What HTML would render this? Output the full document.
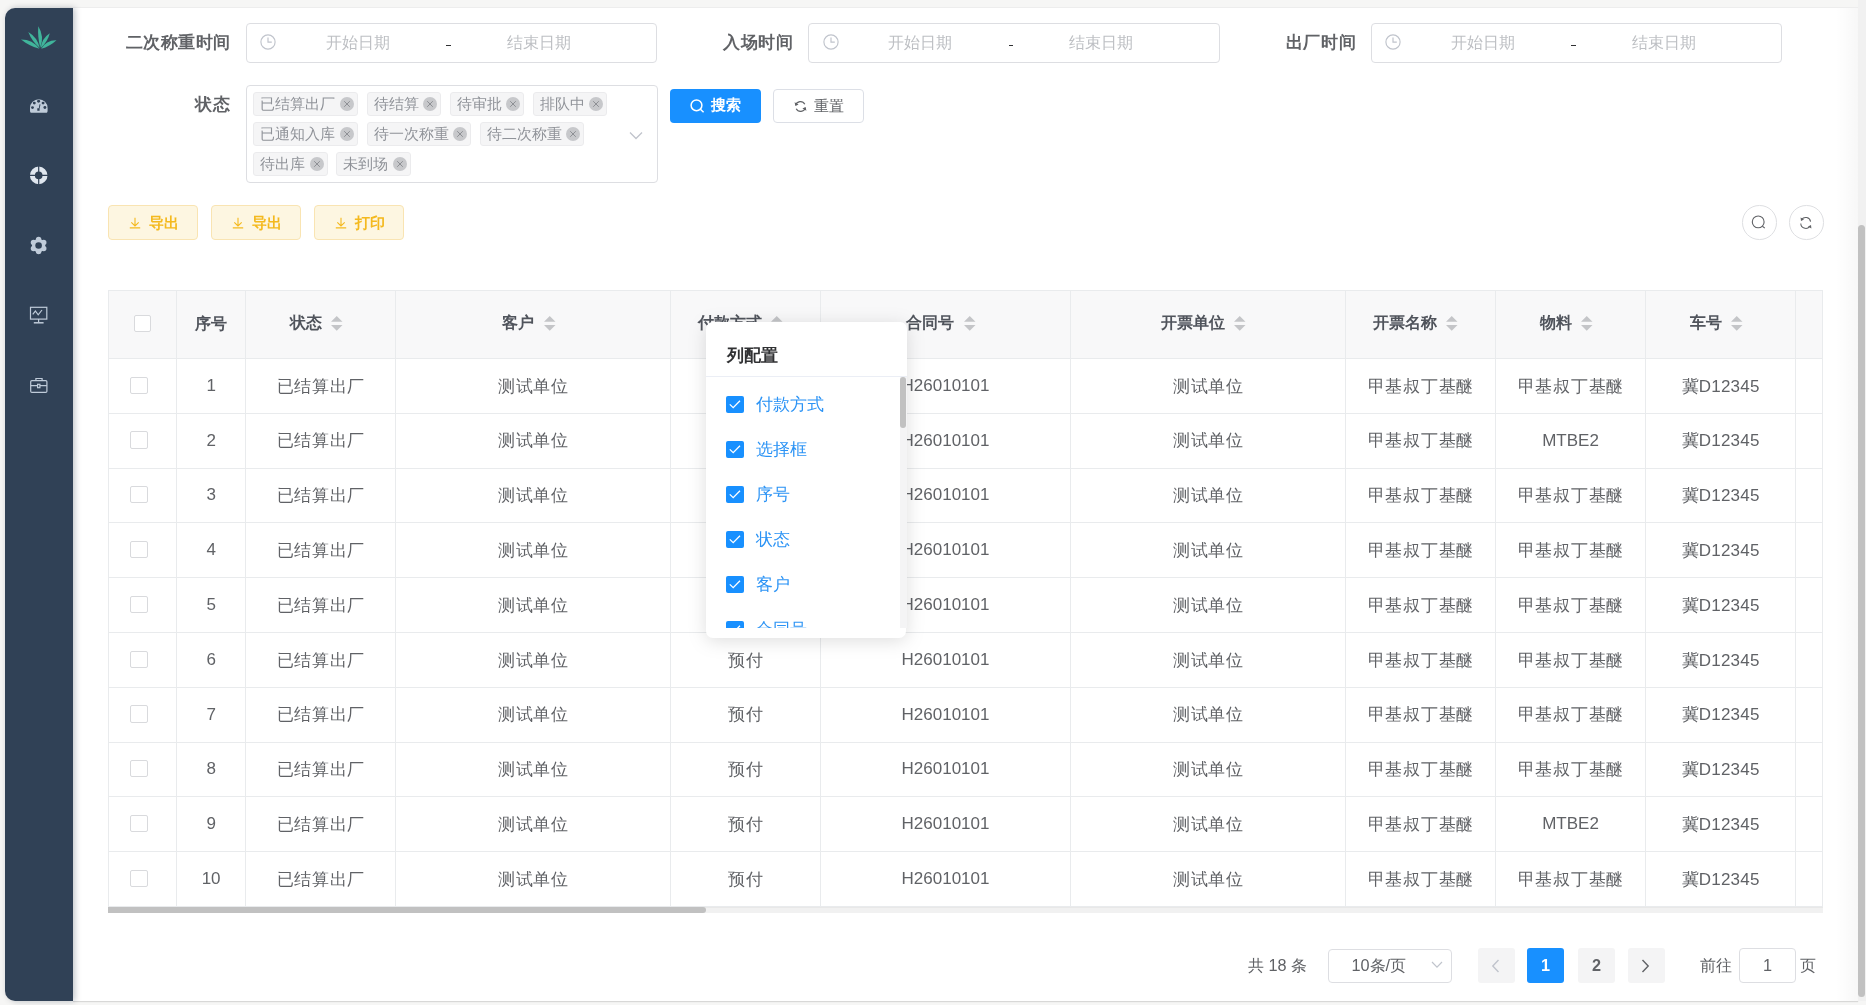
<!DOCTYPE html><html><head><meta charset="utf-8"><style>
*{box-sizing:border-box;margin:0;padding:0}
body{-webkit-font-smoothing:antialiased}
html,body{width:1866px;height:1005px;overflow:hidden;background:#f6f6f5;font-family:"Liberation Sans", sans-serif;}
.a{position:absolute}
.sb{left:5px;top:8px;width:68px;height:993px;background:#304156;border-radius:10px 0 0 10px;box-shadow:2px 0 6px rgba(0,21,41,.25);z-index:2}
.main{left:73px;top:8px;width:1785px;height:993px;background:#fff;box-shadow:0 1px 1px rgba(0,0,0,.12)}
.vtrack{left:1858px;top:0;width:8px;height:1001px;background:#f1f1f1}
.vthumb{left:1858px;top:225px;width:7px;height:772px;background:#c1c1c1;border-radius:4px}
.lbl{letter-spacing:.6px;font-weight:bold;font-size:17px;color:#606266;line-height:20px;white-space:nowrap}
.inp{border:1px solid #dddee2;border-radius:4px;background:#fff}
.ph{font-size:16.25px;color:#bec0c4;line-height:20px;white-space:nowrap}
.dash{font-size:16px;color:#303133;line-height:20px}
.tag{height:24px;background:#f5f5f6;border:1px solid #ebebed;border-radius:3px;font-size:15px;color:#909399;line-height:22px;padding-left:6px;white-space:nowrap}
.tag i{position:absolute;top:4px;width:14px;height:14px;border-radius:50%;background:#c7c8cb}
.btn{border-radius:4px;font-size:15px;line-height:20px;white-space:nowrap}
.th{font-weight:bold;font-size:16.25px;color:#50545c;line-height:20px;white-space:nowrap}
.td{font-size:17px;color:#606266;line-height:20px;white-space:nowrap}
.cb{width:17.4px;height:17.4px;border:1px solid #d9dadd;border-radius:2px;background:#fff}
.cj{letter-spacing:.7px;text-indent:.7px}
.pg{font-size:16.25px;color:#606266;line-height:20px;white-space:nowrap}
</style></head><body><div style="position:absolute;left:0;top:0;width:1866px;height:1005px;will-change:transform"><div class="a sb"></div>
<div class="a" style="left:60px;top:7px;width:1806px;height:1px;background:#ededed"></div>
<div class="a main"></div>
<div class="a" style="left:1836px;top:8px;width:22px;height:993px;background:linear-gradient(to right,rgba(0,0,0,0),rgba(0,0,0,.03))"></div>
<div class="a vtrack"></div><div class="a vthumb"></div>
<div class="a lbl" style="right:1634.9px;top:32.5px">二次称重时间</div>
<div class="a inp" style="left:245.5px;top:23px;width:411.5px;height:40px"></div>
<svg class="a" style="left:260.0px;top:34px" width="16" height="16" viewBox="0 0 16 16"><circle cx="8" cy="8" r="7.1" fill="none" stroke="#c0c4cc" stroke-width="1.15"/><path d="M8 3.6V8.2H11.8" fill="none" stroke="#c0c4cc" stroke-width="1.2"/></svg>
<div class="a ph" style="left:317.5px;width:80px;text-align:center;top:32px">开始日期</div>
<div class="a" style="left:446.0px;top:44.5px;width:4.5px;height:1.3px;background:#303133"></div>
<div class="a ph" style="left:498.5px;width:80px;text-align:center;top:32px">结束日期</div>
<div class="a lbl" style="right:1072.4px;top:32.5px">入场时间</div>
<div class="a inp" style="left:808px;top:23px;width:411.5px;height:40px"></div>
<svg class="a" style="left:822.5px;top:34px" width="16" height="16" viewBox="0 0 16 16"><circle cx="8" cy="8" r="7.1" fill="none" stroke="#c0c4cc" stroke-width="1.15"/><path d="M8 3.6V8.2H11.8" fill="none" stroke="#c0c4cc" stroke-width="1.2"/></svg>
<div class="a ph" style="left:880px;width:80px;text-align:center;top:32px">开始日期</div>
<div class="a" style="left:1008.5px;top:44.5px;width:4.5px;height:1.3px;background:#303133"></div>
<div class="a ph" style="left:1061px;width:80px;text-align:center;top:32px">结束日期</div>
<div class="a lbl" style="right:509.9px;top:32.5px">出厂时间</div>
<div class="a inp" style="left:1370.5px;top:23px;width:411.5px;height:40px"></div>
<svg class="a" style="left:1385.0px;top:34px" width="16" height="16" viewBox="0 0 16 16"><circle cx="8" cy="8" r="7.1" fill="none" stroke="#c0c4cc" stroke-width="1.15"/><path d="M8 3.6V8.2H11.8" fill="none" stroke="#c0c4cc" stroke-width="1.2"/></svg>
<div class="a ph" style="left:1442.5px;width:80px;text-align:center;top:32px">开始日期</div>
<div class="a" style="left:1571.0px;top:44.5px;width:4.5px;height:1.3px;background:#303133"></div>
<div class="a ph" style="left:1623.5px;width:80px;text-align:center;top:32px">结束日期</div>
<div class="a lbl" style="right:1635.4px;top:95px">状态</div>
<div class="a inp" style="left:245.5px;top:85px;width:412px;height:97.5px"></div>
<div class="a tag" style="left:253.3px;top:92.3px;width:104.5px">已结算出厂<i style="left:85.5px"></i><svg class="a" style="left:88.5px;top:7px" width="8" height="8" viewBox="0 0 8 8"><path d="M1.2 1.2L6.8 6.8M6.8 1.2L1.2 6.8" stroke="#8e9095" stroke-width="1"/></svg></div>
<div class="a tag" style="left:366.5px;top:92.3px;width:74.5px">待结算<i style="left:55.5px"></i><svg class="a" style="left:58.5px;top:7px" width="8" height="8" viewBox="0 0 8 8"><path d="M1.2 1.2L6.8 6.8M6.8 1.2L1.2 6.8" stroke="#8e9095" stroke-width="1"/></svg></div>
<div class="a tag" style="left:449.6px;top:92.3px;width:74.5px">待审批<i style="left:55.5px"></i><svg class="a" style="left:58.5px;top:7px" width="8" height="8" viewBox="0 0 8 8"><path d="M1.2 1.2L6.8 6.8M6.8 1.2L1.2 6.8" stroke="#8e9095" stroke-width="1"/></svg></div>
<div class="a tag" style="left:532.5px;top:92.3px;width:74.5px">排队中<i style="left:55.5px"></i><svg class="a" style="left:58.5px;top:7px" width="8" height="8" viewBox="0 0 8 8"><path d="M1.2 1.2L6.8 6.8M6.8 1.2L1.2 6.8" stroke="#8e9095" stroke-width="1"/></svg></div>
<div class="a tag" style="left:253.3px;top:122.3px;width:104.5px">已通知入库<i style="left:85.5px"></i><svg class="a" style="left:88.5px;top:7px" width="8" height="8" viewBox="0 0 8 8"><path d="M1.2 1.2L6.8 6.8M6.8 1.2L1.2 6.8" stroke="#8e9095" stroke-width="1"/></svg></div>
<div class="a tag" style="left:366.5px;top:122.3px;width:104.5px">待一次称重<i style="left:85.5px"></i><svg class="a" style="left:88.5px;top:7px" width="8" height="8" viewBox="0 0 8 8"><path d="M1.2 1.2L6.8 6.8M6.8 1.2L1.2 6.8" stroke="#8e9095" stroke-width="1"/></svg></div>
<div class="a tag" style="left:479.8px;top:122.3px;width:104.5px">待二次称重<i style="left:85.5px"></i><svg class="a" style="left:88.5px;top:7px" width="8" height="8" viewBox="0 0 8 8"><path d="M1.2 1.2L6.8 6.8M6.8 1.2L1.2 6.8" stroke="#8e9095" stroke-width="1"/></svg></div>
<div class="a tag" style="left:253.3px;top:152.3px;width:74.5px">待出库<i style="left:55.5px"></i><svg class="a" style="left:58.5px;top:7px" width="8" height="8" viewBox="0 0 8 8"><path d="M1.2 1.2L6.8 6.8M6.8 1.2L1.2 6.8" stroke="#8e9095" stroke-width="1"/></svg></div>
<div class="a tag" style="left:336.3px;top:152.3px;width:74.5px">未到场<i style="left:55.5px"></i><svg class="a" style="left:58.5px;top:7px" width="8" height="8" viewBox="0 0 8 8"><path d="M1.2 1.2L6.8 6.8M6.8 1.2L1.2 6.8" stroke="#8e9095" stroke-width="1"/></svg></div>
<svg class="a" style="left:629px;top:131px" width="14" height="9" viewBox="0 0 14 9"><path d="M1 1.5L7 7.5L13 1.5" fill="none" stroke="#c0c4cc" stroke-width="1.3"/></svg>
<div class="a btn" style="left:670px;top:89px;width:91px;height:34px;background:#1890ff;color:#fff"></div>
<svg class="a" style="left:689.5px;top:98.5px" width="15" height="14" viewBox="0 0 15 14"><circle cx="6.5" cy="6.3" r="5.4" fill="none" stroke="#fff" stroke-width="1.5"/><path d="M10.4 10.2L13.6 13.3" stroke="#fff" stroke-width="1.5"/></svg>
<div class="a btn" style="left:711px;top:95.3px;color:#fff;font-weight:bold">搜索</div>
<div class="a btn" style="left:773px;top:89px;width:91px;height:34px;border:1px solid #dcdfe6;background:#fff"></div>
<svg class="a" style="left:794px;top:99.5px" width="13" height="13" viewBox="0 0 13 13"><path d="M10.8 4.3A5 5 0 0 0 1.6 5.2M2.2 8.7A5 5 0 0 0 11.4 7.8" fill="none" stroke="#606266" stroke-width="1.2"/><path d="M0.6 2.2L1.4 6L4.6 4.6Z M12.4 10.8L11.6 7L8.4 8.4Z" fill="#606266"/></svg>
<div class="a btn" style="left:814px;top:96px;color:#606266">重置</div>
<div class="a btn" style="left:108px;top:205px;width:90.2px;height:35px;background:#fdf6e1;border:1px solid #f9e4b2"></div>
<svg class="a" style="left:128.5px;top:217px" width="12" height="12" viewBox="0 0 12 12"><path d="M6 0.8V9M2.3 5.3L6 9L9.7 5.3M0.8 10.9H11.2" fill="none" stroke="#f4b91e" stroke-width="1.1"/></svg>
<div class="a btn" style="left:149px;top:212.5px;color:#f4b91e;font-weight:bold">导出</div>
<div class="a btn" style="left:211.2px;top:205px;width:90.2px;height:35px;background:#fdf6e1;border:1px solid #f9e4b2"></div>
<svg class="a" style="left:231.7px;top:217px" width="12" height="12" viewBox="0 0 12 12"><path d="M6 0.8V9M2.3 5.3L6 9L9.7 5.3M0.8 10.9H11.2" fill="none" stroke="#f4b91e" stroke-width="1.1"/></svg>
<div class="a btn" style="left:252.2px;top:212.5px;color:#f4b91e;font-weight:bold">导出</div>
<div class="a btn" style="left:314.2px;top:205px;width:90.2px;height:35px;background:#fdf6e1;border:1px solid #f9e4b2"></div>
<svg class="a" style="left:334.7px;top:217px" width="12" height="12" viewBox="0 0 12 12"><path d="M6 0.8V9M2.3 5.3L6 9L9.7 5.3M0.8 10.9H11.2" fill="none" stroke="#f4b91e" stroke-width="1.1"/></svg>
<div class="a btn" style="left:355.2px;top:212.5px;color:#f4b91e;font-weight:bold">打印</div>
<div class="a" style="left:1742px;top:205px;width:34.5px;height:34.5px;border:1px solid #dedfe2;border-radius:50%"></div>
<div class="a" style="left:1789.3px;top:205px;width:34.5px;height:34.5px;border:1px solid #dedfe2;border-radius:50%"></div>
<svg class="a" style="left:1750px;top:214px" width="17" height="17" viewBox="0 0 17 17"><circle cx="8.2" cy="7.9" r="5.9" fill="none" stroke="#606266" stroke-width="1.1"/><path d="M12.4 12.2L14.8 14.1" stroke="#606266" stroke-width="1.1"/></svg>
<svg class="a" style="left:1799px;top:215.5px" width="14" height="14" viewBox="0 0 14 14"><path d="M11.6 5.6A5 5 0 0 0 2.6 3.6M1.8 7.4A5 5 0 0 0 10.6 10.6" fill="none" stroke="#606266" stroke-width="1.05"/><path d="M1.6 1.6L2 5L5 3.6Z M12.4 12.4L12 9L9 10.4Z" fill="#606266"/></svg>
<div class="a" style="left:108px;top:290.5px;width:1714.5px;height:67.89999999999998px;background:#f8f8f9"></div>
<div class="a" style="left:108px;top:290.0px;width:1714.5px;height:1px;background:#e9ebed"></div>
<div class="a" style="left:108px;top:357.9px;width:1714.5px;height:1px;background:#e9ebed"></div>
<div class="a" style="left:108px;top:412.7px;width:1714.5px;height:1px;background:#e9ebed"></div>
<div class="a" style="left:108px;top:467.5px;width:1714.5px;height:1px;background:#e9ebed"></div>
<div class="a" style="left:108px;top:522.3px;width:1714.5px;height:1px;background:#e9ebed"></div>
<div class="a" style="left:108px;top:577.0999999999999px;width:1714.5px;height:1px;background:#e9ebed"></div>
<div class="a" style="left:108px;top:631.9px;width:1714.5px;height:1px;background:#e9ebed"></div>
<div class="a" style="left:108px;top:686.6999999999999px;width:1714.5px;height:1px;background:#e9ebed"></div>
<div class="a" style="left:108px;top:741.5px;width:1714.5px;height:1px;background:#e9ebed"></div>
<div class="a" style="left:108px;top:796.3px;width:1714.5px;height:1px;background:#e9ebed"></div>
<div class="a" style="left:108px;top:851.0999999999999px;width:1714.5px;height:1px;background:#e9ebed"></div>
<div class="a" style="left:108px;top:905.9px;width:1714.5px;height:1px;background:#e9ebed"></div>
<div class="a" style="left:107.5px;top:290.5px;width:1px;height:616.0px;background:#e9ebed"></div>
<div class="a" style="left:176.25px;top:290.5px;width:1px;height:616.0px;background:#e9ebed"></div>
<div class="a" style="left:245.0px;top:290.5px;width:1px;height:616.0px;background:#e9ebed"></div>
<div class="a" style="left:395.0px;top:290.5px;width:1px;height:616.0px;background:#e9ebed"></div>
<div class="a" style="left:670.0px;top:290.5px;width:1px;height:616.0px;background:#e9ebed"></div>
<div class="a" style="left:820.0px;top:290.5px;width:1px;height:616.0px;background:#e9ebed"></div>
<div class="a" style="left:1070.0px;top:290.5px;width:1px;height:616.0px;background:#e9ebed"></div>
<div class="a" style="left:1345.0px;top:290.5px;width:1px;height:616.0px;background:#e9ebed"></div>
<div class="a" style="left:1495.0px;top:290.5px;width:1px;height:616.0px;background:#e9ebed"></div>
<div class="a" style="left:1645.0px;top:290.5px;width:1px;height:616.0px;background:#e9ebed"></div>
<div class="a" style="left:1795.0px;top:290.5px;width:1px;height:616.0px;background:#e9ebed"></div>
<div class="a" style="left:1822.0px;top:290.5px;width:1px;height:616.0px;background:#e9ebed"></div>
<div class="a cb" style="left:134.3px;top:315.3px;width:16.5px;height:17px"></div>
<div class="a th" style="left:176.75px;width:68.75px;text-align:center;top:312.5px">序号</div>
<div class="a th" style="left:289.55px;top:312px">状态</div>
<svg class="a" style="left:331.45px;top:316px" width="12" height="15" viewBox="0 0 12 15"><path d="M0 5.8L5.75 0L11.5 5.8Z M0 9L5.75 14.8L11.5 9Z" fill="#c4c5c8"/></svg>
<div class="a th" style="left:502.05px;top:312px">客户</div>
<svg class="a" style="left:543.9499999999999px;top:316px" width="12" height="15" viewBox="0 0 12 15"><path d="M0 5.8L5.75 0L11.5 5.8Z M0 9L5.75 14.8L11.5 9Z" fill="#c4c5c8"/></svg>
<div class="a th" style="left:698.3px;top:312px">付款方式</div>
<svg class="a" style="left:771.3px;top:316px" width="12" height="15" viewBox="0 0 12 15"><path d="M0 5.8L5.75 0L11.5 5.8Z M0 9L5.75 14.8L11.5 9Z" fill="#c4c5c8"/></svg>
<div class="a th" style="left:906.425px;top:312px">合同号</div>
<svg class="a" style="left:963.875px;top:316px" width="12" height="15" viewBox="0 0 12 15"><path d="M0 5.8L5.75 0L11.5 5.8Z M0 9L5.75 14.8L11.5 9Z" fill="#c4c5c8"/></svg>
<div class="a th" style="left:1160.8px;top:312px">开票单位</div>
<svg class="a" style="left:1233.8px;top:316px" width="12" height="15" viewBox="0 0 12 15"><path d="M0 5.8L5.75 0L11.5 5.8Z M0 9L5.75 14.8L11.5 9Z" fill="#c4c5c8"/></svg>
<div class="a th" style="left:1373.3px;top:312px">开票名称</div>
<svg class="a" style="left:1446.3px;top:316px" width="12" height="15" viewBox="0 0 12 15"><path d="M0 5.8L5.75 0L11.5 5.8Z M0 9L5.75 14.8L11.5 9Z" fill="#c4c5c8"/></svg>
<div class="a th" style="left:1539.55px;top:312px">物料</div>
<svg class="a" style="left:1581.45px;top:316px" width="12" height="15" viewBox="0 0 12 15"><path d="M0 5.8L5.75 0L11.5 5.8Z M0 9L5.75 14.8L11.5 9Z" fill="#c4c5c8"/></svg>
<div class="a th" style="left:1689.55px;top:312px">车号</div>
<svg class="a" style="left:1731.45px;top:316px" width="12" height="15" viewBox="0 0 12 15"><path d="M0 5.8L5.75 0L11.5 5.8Z M0 9L5.75 14.8L11.5 9Z" fill="#c4c5c8"/></svg>
<div class="a cb" style="left:130.3px;top:376.5px"></div>
<div class="a td" style="left:176.75px;width:68.75px;text-align:center;top:375.79999999999995px">1</div>
<div class="a td cj" style="left:245.5px;width:150.0px;text-align:center;top:376.59999999999997px">已结算出厂</div>
<div class="a td cj" style="left:395.5px;width:275.0px;text-align:center;top:376.59999999999997px">测试单位</div>
<div class="a td cj" style="left:670.5px;width:150.0px;text-align:center;top:376.59999999999997px">预付</div>
<div class="a td" style="left:820.5px;width:250.0px;text-align:center;top:375.79999999999995px">H26010101</div>
<div class="a td cj" style="left:1070.5px;width:275.0px;text-align:center;top:376.59999999999997px">测试单位</div>
<div class="a td cj" style="left:1345.5px;width:150.0px;text-align:center;top:376.59999999999997px">甲基叔丁基醚</div>
<div class="a td cj" style="left:1495.5px;width:150.0px;text-align:center;top:376.59999999999997px">甲基叔丁基醚</div>
<div class="a td cj" style="left:1645.5px;width:150.0px;text-align:center;top:376.59999999999997px;letter-spacing:.2px;text-indent:.2px">冀D12345</div>
<div class="a cb" style="left:130.3px;top:431.3px"></div>
<div class="a td" style="left:176.75px;width:68.75px;text-align:center;top:430.59999999999997px">2</div>
<div class="a td cj" style="left:245.5px;width:150.0px;text-align:center;top:431.4px">已结算出厂</div>
<div class="a td cj" style="left:395.5px;width:275.0px;text-align:center;top:431.4px">测试单位</div>
<div class="a td cj" style="left:670.5px;width:150.0px;text-align:center;top:431.4px">预付</div>
<div class="a td" style="left:820.5px;width:250.0px;text-align:center;top:430.59999999999997px">H26010101</div>
<div class="a td cj" style="left:1070.5px;width:275.0px;text-align:center;top:431.4px">测试单位</div>
<div class="a td cj" style="left:1345.5px;width:150.0px;text-align:center;top:431.4px">甲基叔丁基醚</div>
<div class="a td" style="left:1495.5px;width:150.0px;text-align:center;top:430.59999999999997px">MTBE2</div>
<div class="a td cj" style="left:1645.5px;width:150.0px;text-align:center;top:431.4px;letter-spacing:.2px;text-indent:.2px">冀D12345</div>
<div class="a cb" style="left:130.3px;top:486.1px"></div>
<div class="a td" style="left:176.75px;width:68.75px;text-align:center;top:485.4px">3</div>
<div class="a td cj" style="left:245.5px;width:150.0px;text-align:center;top:486.2px">已结算出厂</div>
<div class="a td cj" style="left:395.5px;width:275.0px;text-align:center;top:486.2px">测试单位</div>
<div class="a td cj" style="left:670.5px;width:150.0px;text-align:center;top:486.2px">预付</div>
<div class="a td" style="left:820.5px;width:250.0px;text-align:center;top:485.4px">H26010101</div>
<div class="a td cj" style="left:1070.5px;width:275.0px;text-align:center;top:486.2px">测试单位</div>
<div class="a td cj" style="left:1345.5px;width:150.0px;text-align:center;top:486.2px">甲基叔丁基醚</div>
<div class="a td cj" style="left:1495.5px;width:150.0px;text-align:center;top:486.2px">甲基叔丁基醚</div>
<div class="a td cj" style="left:1645.5px;width:150.0px;text-align:center;top:486.2px;letter-spacing:.2px;text-indent:.2px">冀D12345</div>
<div class="a cb" style="left:130.3px;top:540.9px"></div>
<div class="a td" style="left:176.75px;width:68.75px;text-align:center;top:540.1999999999999px">4</div>
<div class="a td cj" style="left:245.5px;width:150.0px;text-align:center;top:541.0px">已结算出厂</div>
<div class="a td cj" style="left:395.5px;width:275.0px;text-align:center;top:541.0px">测试单位</div>
<div class="a td cj" style="left:670.5px;width:150.0px;text-align:center;top:541.0px">预付</div>
<div class="a td" style="left:820.5px;width:250.0px;text-align:center;top:540.1999999999999px">H26010101</div>
<div class="a td cj" style="left:1070.5px;width:275.0px;text-align:center;top:541.0px">测试单位</div>
<div class="a td cj" style="left:1345.5px;width:150.0px;text-align:center;top:541.0px">甲基叔丁基醚</div>
<div class="a td cj" style="left:1495.5px;width:150.0px;text-align:center;top:541.0px">甲基叔丁基醚</div>
<div class="a td cj" style="left:1645.5px;width:150.0px;text-align:center;top:541.0px;letter-spacing:.2px;text-indent:.2px">冀D12345</div>
<div class="a cb" style="left:130.3px;top:595.6999999999999px"></div>
<div class="a td" style="left:176.75px;width:68.75px;text-align:center;top:594.9999999999999px">5</div>
<div class="a td cj" style="left:245.5px;width:150.0px;text-align:center;top:595.8px">已结算出厂</div>
<div class="a td cj" style="left:395.5px;width:275.0px;text-align:center;top:595.8px">测试单位</div>
<div class="a td cj" style="left:670.5px;width:150.0px;text-align:center;top:595.8px">预付</div>
<div class="a td" style="left:820.5px;width:250.0px;text-align:center;top:594.9999999999999px">H26010101</div>
<div class="a td cj" style="left:1070.5px;width:275.0px;text-align:center;top:595.8px">测试单位</div>
<div class="a td cj" style="left:1345.5px;width:150.0px;text-align:center;top:595.8px">甲基叔丁基醚</div>
<div class="a td cj" style="left:1495.5px;width:150.0px;text-align:center;top:595.8px">甲基叔丁基醚</div>
<div class="a td cj" style="left:1645.5px;width:150.0px;text-align:center;top:595.8px;letter-spacing:.2px;text-indent:.2px">冀D12345</div>
<div class="a cb" style="left:130.3px;top:650.5px"></div>
<div class="a td" style="left:176.75px;width:68.75px;text-align:center;top:649.8px">6</div>
<div class="a td cj" style="left:245.5px;width:150.0px;text-align:center;top:650.6px">已结算出厂</div>
<div class="a td cj" style="left:395.5px;width:275.0px;text-align:center;top:650.6px">测试单位</div>
<div class="a td cj" style="left:670.5px;width:150.0px;text-align:center;top:650.6px">预付</div>
<div class="a td" style="left:820.5px;width:250.0px;text-align:center;top:649.8px">H26010101</div>
<div class="a td cj" style="left:1070.5px;width:275.0px;text-align:center;top:650.6px">测试单位</div>
<div class="a td cj" style="left:1345.5px;width:150.0px;text-align:center;top:650.6px">甲基叔丁基醚</div>
<div class="a td cj" style="left:1495.5px;width:150.0px;text-align:center;top:650.6px">甲基叔丁基醚</div>
<div class="a td cj" style="left:1645.5px;width:150.0px;text-align:center;top:650.6px;letter-spacing:.2px;text-indent:.2px">冀D12345</div>
<div class="a cb" style="left:130.3px;top:705.3px"></div>
<div class="a td" style="left:176.75px;width:68.75px;text-align:center;top:704.5999999999999px">7</div>
<div class="a td cj" style="left:245.5px;width:150.0px;text-align:center;top:705.4px">已结算出厂</div>
<div class="a td cj" style="left:395.5px;width:275.0px;text-align:center;top:705.4px">测试单位</div>
<div class="a td cj" style="left:670.5px;width:150.0px;text-align:center;top:705.4px">预付</div>
<div class="a td" style="left:820.5px;width:250.0px;text-align:center;top:704.5999999999999px">H26010101</div>
<div class="a td cj" style="left:1070.5px;width:275.0px;text-align:center;top:705.4px">测试单位</div>
<div class="a td cj" style="left:1345.5px;width:150.0px;text-align:center;top:705.4px">甲基叔丁基醚</div>
<div class="a td cj" style="left:1495.5px;width:150.0px;text-align:center;top:705.4px">甲基叔丁基醚</div>
<div class="a td cj" style="left:1645.5px;width:150.0px;text-align:center;top:705.4px;letter-spacing:.2px;text-indent:.2px">冀D12345</div>
<div class="a cb" style="left:130.3px;top:760.1px"></div>
<div class="a td" style="left:176.75px;width:68.75px;text-align:center;top:759.4px">8</div>
<div class="a td cj" style="left:245.5px;width:150.0px;text-align:center;top:760.2px">已结算出厂</div>
<div class="a td cj" style="left:395.5px;width:275.0px;text-align:center;top:760.2px">测试单位</div>
<div class="a td cj" style="left:670.5px;width:150.0px;text-align:center;top:760.2px">预付</div>
<div class="a td" style="left:820.5px;width:250.0px;text-align:center;top:759.4px">H26010101</div>
<div class="a td cj" style="left:1070.5px;width:275.0px;text-align:center;top:760.2px">测试单位</div>
<div class="a td cj" style="left:1345.5px;width:150.0px;text-align:center;top:760.2px">甲基叔丁基醚</div>
<div class="a td cj" style="left:1495.5px;width:150.0px;text-align:center;top:760.2px">甲基叔丁基醚</div>
<div class="a td cj" style="left:1645.5px;width:150.0px;text-align:center;top:760.2px;letter-spacing:.2px;text-indent:.2px">冀D12345</div>
<div class="a cb" style="left:130.3px;top:814.9px"></div>
<div class="a td" style="left:176.75px;width:68.75px;text-align:center;top:814.1999999999999px">9</div>
<div class="a td cj" style="left:245.5px;width:150.0px;text-align:center;top:815.0px">已结算出厂</div>
<div class="a td cj" style="left:395.5px;width:275.0px;text-align:center;top:815.0px">测试单位</div>
<div class="a td cj" style="left:670.5px;width:150.0px;text-align:center;top:815.0px">预付</div>
<div class="a td" style="left:820.5px;width:250.0px;text-align:center;top:814.1999999999999px">H26010101</div>
<div class="a td cj" style="left:1070.5px;width:275.0px;text-align:center;top:815.0px">测试单位</div>
<div class="a td cj" style="left:1345.5px;width:150.0px;text-align:center;top:815.0px">甲基叔丁基醚</div>
<div class="a td" style="left:1495.5px;width:150.0px;text-align:center;top:814.1999999999999px">MTBE2</div>
<div class="a td cj" style="left:1645.5px;width:150.0px;text-align:center;top:815.0px;letter-spacing:.2px;text-indent:.2px">冀D12345</div>
<div class="a cb" style="left:130.3px;top:869.6999999999999px"></div>
<div class="a td" style="left:176.75px;width:68.75px;text-align:center;top:868.9999999999999px">10</div>
<div class="a td cj" style="left:245.5px;width:150.0px;text-align:center;top:869.8px">已结算出厂</div>
<div class="a td cj" style="left:395.5px;width:275.0px;text-align:center;top:869.8px">测试单位</div>
<div class="a td cj" style="left:670.5px;width:150.0px;text-align:center;top:869.8px">预付</div>
<div class="a td" style="left:820.5px;width:250.0px;text-align:center;top:868.9999999999999px">H26010101</div>
<div class="a td cj" style="left:1070.5px;width:275.0px;text-align:center;top:869.8px">测试单位</div>
<div class="a td cj" style="left:1345.5px;width:150.0px;text-align:center;top:869.8px">甲基叔丁基醚</div>
<div class="a td cj" style="left:1495.5px;width:150.0px;text-align:center;top:869.8px">甲基叔丁基醚</div>
<div class="a td cj" style="left:1645.5px;width:150.0px;text-align:center;top:869.8px;letter-spacing:.2px;text-indent:.2px">冀D12345</div>
<div class="a" style="left:108px;top:906.5px;width:1714.5px;height:6.5px;background:#f1f1f1;border-top:1px solid #e8e8e8"></div>
<div class="a" style="left:108px;top:906.5px;width:597.5px;height:6.5px;background:#c1c1c1;border-radius:0 3px 3px 0"></div>
<div class="a" style="left:706px;top:322px;width:200.5px;height:315.5px;z-index:5;filter:drop-shadow(0 3px 9px rgba(0,0,0,.13))"><div class="a" style="left:0;top:0;width:200.5px;height:55px;background:#fff;border-radius:7px 7px 0 0"></div><div class="a" style="left:20.5px;top:23.5px;font-weight:bold;font-size:17px;color:#303133;line-height:20px;white-space:nowrap">列配置</div><div class="a" style="left:0;top:54px;width:200.5px;height:1px;background:#ebeef5"></div><div class="a" style="left:0;top:55px;width:193.5px;height:250.5px;overflow:hidden;background:#fff"><div class="a" style="left:20px;top:19px;width:18px;height:17px;background:#1890ff;border-radius:2px"></div><svg class="a" style="left:20px;top:19px" width="18" height="17" viewBox="0 0 18 17"><path d="M3.8 8.4L7.2 11.6L14 4.8" fill="none" stroke="#fff" stroke-width="1.3"/></svg><div class="a" style="left:50px;top:17.5px;font-size:17px;color:#2b93f5;line-height:20px;white-space:nowrap">付款方式</div><div class="a" style="left:20px;top:64px;width:18px;height:17px;background:#1890ff;border-radius:2px"></div><svg class="a" style="left:20px;top:64px" width="18" height="17" viewBox="0 0 18 17"><path d="M3.8 8.4L7.2 11.6L14 4.8" fill="none" stroke="#fff" stroke-width="1.3"/></svg><div class="a" style="left:50px;top:62.5px;font-size:17px;color:#2b93f5;line-height:20px;white-space:nowrap">选择框</div><div class="a" style="left:20px;top:109px;width:18px;height:17px;background:#1890ff;border-radius:2px"></div><svg class="a" style="left:20px;top:109px" width="18" height="17" viewBox="0 0 18 17"><path d="M3.8 8.4L7.2 11.6L14 4.8" fill="none" stroke="#fff" stroke-width="1.3"/></svg><div class="a" style="left:50px;top:107.5px;font-size:17px;color:#2b93f5;line-height:20px;white-space:nowrap">序号</div><div class="a" style="left:20px;top:154px;width:18px;height:17px;background:#1890ff;border-radius:2px"></div><svg class="a" style="left:20px;top:154px" width="18" height="17" viewBox="0 0 18 17"><path d="M3.8 8.4L7.2 11.6L14 4.8" fill="none" stroke="#fff" stroke-width="1.3"/></svg><div class="a" style="left:50px;top:152.5px;font-size:17px;color:#2b93f5;line-height:20px;white-space:nowrap">状态</div><div class="a" style="left:20px;top:199px;width:18px;height:17px;background:#1890ff;border-radius:2px"></div><svg class="a" style="left:20px;top:199px" width="18" height="17" viewBox="0 0 18 17"><path d="M3.8 8.4L7.2 11.6L14 4.8" fill="none" stroke="#fff" stroke-width="1.3"/></svg><div class="a" style="left:50px;top:197.5px;font-size:17px;color:#2b93f5;line-height:20px;white-space:nowrap">客户</div><div class="a" style="left:20px;top:244px;width:18px;height:17px;background:#1890ff;border-radius:2px"></div><svg class="a" style="left:20px;top:244px" width="18" height="17" viewBox="0 0 18 17"><path d="M3.8 8.4L7.2 11.6L14 4.8" fill="none" stroke="#fff" stroke-width="1.3"/></svg><div class="a" style="left:50px;top:242.5px;font-size:17px;color:#2b93f5;line-height:20px;white-space:nowrap">合同号</div></div><div class="a" style="left:193.5px;top:55px;width:7px;height:250.5px;background:#f4f4f5"></div><div class="a" style="left:193.5px;top:55px;width:6.5px;height:50.5px;background:#c1c1c1;border-radius:3px"></div><div class="a" style="left:0;top:305.5px;width:200px;height:10px;background:#fff;border-radius:0 0 7px 7px"></div></div>
<div class="a pg" style="left:1248px;top:955px">共 18 条</div>
<div class="a inp" style="left:1327.5px;top:948.5px;width:124px;height:34px"></div>
<div class="a pg" style="left:1351.5px;top:955px">10条/页</div>
<svg class="a" style="left:1431px;top:961px" width="12" height="8" viewBox="0 0 12 8"><path d="M1 1L6 6.2L11 1" fill="none" stroke="#c0c4cc" stroke-width="1.2"/></svg>
<div class="a" style="left:1478px;top:948px;width:37px;height:35px;background:#f4f4f5;border-radius:3px;color:#c0c4cc;font-weight:bold;font-size:16.25px;line-height:35px;text-align:center"></div>
<div class="a" style="left:1527px;top:948px;width:37px;height:35px;background:#1890ff;border-radius:3px;color:#fff;font-weight:bold;font-size:16.25px;line-height:35px;text-align:center">1</div>
<div class="a" style="left:1578px;top:948px;width:37px;height:35px;background:#f4f4f5;border-radius:3px;color:#606266;font-weight:bold;font-size:16.25px;line-height:35px;text-align:center">2</div>
<div class="a" style="left:1627.5px;top:948px;width:37px;height:35px;background:#f4f4f5;border-radius:3px;color:#606266;font-weight:bold;font-size:16.25px;line-height:35px;text-align:center"></div>
<svg class="a" style="left:1491px;top:958.5px" width="9" height="14" viewBox="0 0 9 14"><path d="M7.5 1L1.8 7L7.5 13" fill="none" stroke="#c0c4cc" stroke-width="1.4"/></svg>
<svg class="a" style="left:1641px;top:958.5px" width="9" height="14" viewBox="0 0 9 14"><path d="M1.5 1L7.2 7L1.5 13" fill="none" stroke="#606266" stroke-width="1.4"/></svg>
<div class="a pg" style="left:1700px;top:955px">前往</div>
<div class="a inp" style="left:1739px;top:948px;width:57px;height:34.5px"></div>
<div class="a pg" style="left:1739px;width:57px;text-align:center;top:955px">1</div>
<div class="a pg" style="left:1800px;top:955px">页</div>
<svg class="a" style="left:18px;top:20px;z-index:3" width="42" height="32" viewBox="0 0 42 32" fill="#40b59b"><path d="M3.00 19.40Q11.30 25.97 21.50 28.80Q14.65 19.37 3.00 19.40Z"/><path d="M10.30 12.10Q13.94 21.57 21.80 28.00Q19.45 17.59 10.30 12.10Z"/><path d="M20.30 6.20Q19.46 17.01 22.20 27.50Q26.63 16.37 20.30 6.20Z"/><path d="M31.80 13.20Q23.71 18.42 22.80 28.00Q29.52 21.95 31.80 13.20Z"/><path d="M38.50 20.20Q28.25 19.88 23.20 28.80Q31.88 26.33 38.50 20.20Z"/></svg>
<svg class="a" style="left:29px;top:98px;z-index:3" width="20" height="16" viewBox="0 0 20 16"><path d="M2.6 14.7C1.4 14.7 1 13.8 1 12.4V10A8.8 8.8 0 0 1 18.6 10V12.4C18.6 13.8 18.2 14.7 17 14.7Z" fill="#bfcbd9"/><circle cx="9.6" cy="3.3" r="1.45" fill="#304156"/><circle cx="5.3" cy="5.1" r="1.45" fill="#304156"/><circle cx="14.1" cy="5.1" r="1.45" fill="#304156"/><circle cx="3.5" cy="9.6" r="1.45" fill="#304156"/><circle cx="15.9" cy="9.5" r="1.45" fill="#304156"/><path d="M10.5 6.2L11.5 6.5L10.6 10.4V12.7H8.3V10.2H9.8Z" fill="#304156"/></svg>
<svg class="a" style="left:29px;top:166px;z-index:3" width="20" height="20" viewBox="0 0 20 20"><circle cx="9.7" cy="9.4" r="6.3" fill="none" stroke="#dfe6ef" stroke-width="5"/><path d="M9.7 0V19M0 9.4H20" stroke="#304156" stroke-width="1.2"/></svg>
<svg class="a" style="left:29px;top:236px;z-index:3" width="20" height="20" viewBox="0 0 20 20"><circle cx="9.6" cy="9.5" r="6.6" fill="#bfcbd9"/><circle cx="9.60" cy="3.60" r="2.75" fill="#bfcbd9"/><circle cx="14.71" cy="6.55" r="2.75" fill="#bfcbd9"/><circle cx="14.71" cy="12.45" r="2.75" fill="#bfcbd9"/><circle cx="9.60" cy="15.40" r="2.75" fill="#bfcbd9"/><circle cx="4.49" cy="12.45" r="2.75" fill="#bfcbd9"/><circle cx="4.49" cy="6.55" r="2.75" fill="#bfcbd9"/><circle cx="9.6" cy="9.5" r="3.3" fill="#304156"/></svg>
<svg class="a" style="left:29px;top:306px;z-index:3" width="20" height="20" viewBox="0 0 20 20" fill="none" stroke="#bfcbd9" stroke-width="1.2"><rect x="1.5" y="1.3" width="16.3" height="11.8"/><path d="M3.7 8.3L6.4 5L9.2 8.8L13 4"/><path d="M9.6 13V16.3"/><path d="M4.8 16.8H14.6" stroke-width="1.5"/></svg>
<svg class="a" style="left:29px;top:376px;z-index:3" width="20" height="20" viewBox="0 0 20 20" fill="none" stroke="#bfcbd9" stroke-width="1.2"><path d="M6.9 4.5V2.5H13.1V4.5"/><rect x="1.7" y="4.6" width="16.2" height="11.8" rx="1.2"/><path d="M1.7 9.6H8.6M10.8 9.6H17.9"/><rect x="8.6" y="8.3" width="2.3" height="3.4"/></svg></div></body></html>
